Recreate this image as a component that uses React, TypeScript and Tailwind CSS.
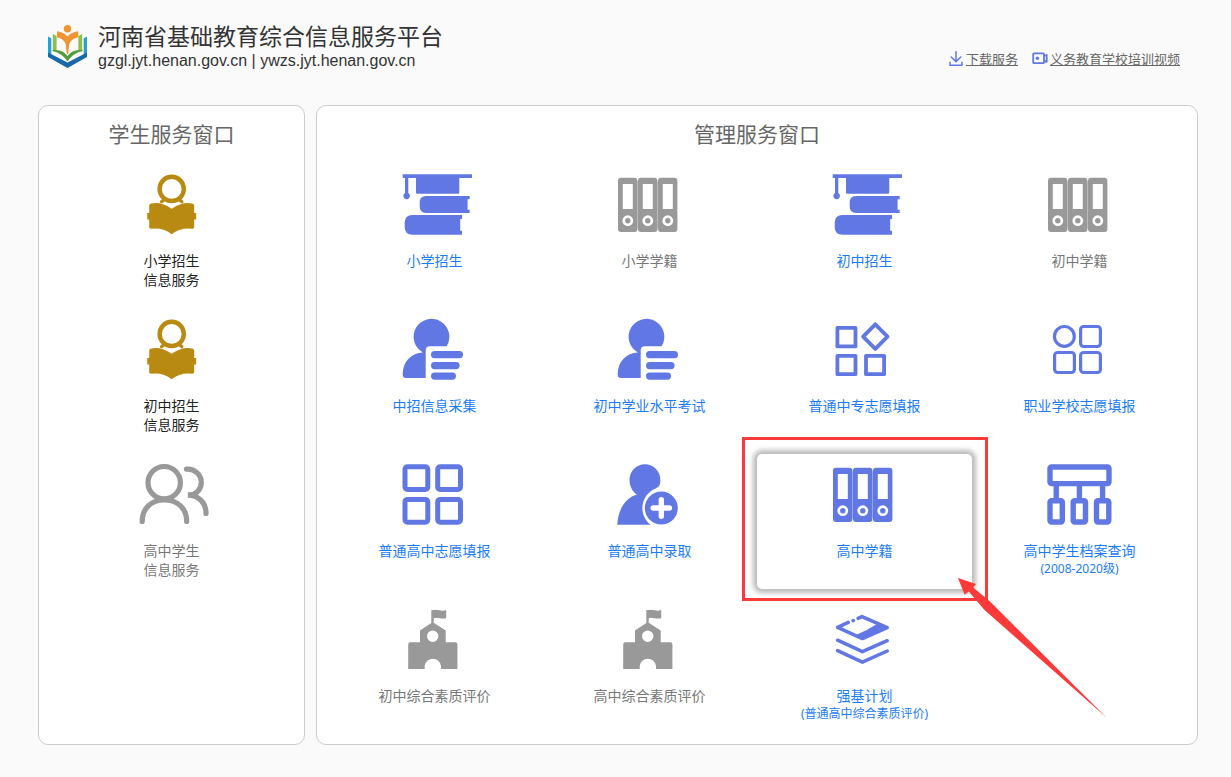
import React from 'react';

type IconName =
  | 'reader'
  | 'people'
  | 'books'
  | 'binders'
  | 'form'
  | 'shapes'
  | 'modules'
  | 'tiles'
  | 'enroll'
  | 'tree'
  | 'school'
  | 'layers';

interface Service {
  label: string;
  note?: string;
  icon: IconName;
  disabled?: boolean;
  active?: boolean;
}

const studentServices: { lines: string[]; icon: IconName; disabled?: boolean }[] = [
  { lines: ['小学招生', '信息服务'], icon: 'reader' },
  { lines: ['初中招生', '信息服务'], icon: 'reader' },
  { lines: ['高中学生', '信息服务'], icon: 'people', disabled: true },
];

const manageServices: Service[] = [
  { label: '小学招生', icon: 'books' },
  { label: '小学学籍', icon: 'binders', disabled: true },
  { label: '初中招生', icon: 'books' },
  { label: '初中学籍', icon: 'binders', disabled: true },
  { label: '中招信息采集', icon: 'form' },
  { label: '初中学业水平考试', icon: 'form' },
  { label: '普通中专志愿填报', icon: 'shapes' },
  { label: '职业学校志愿填报', icon: 'modules' },
  { label: '普通高中志愿填报', icon: 'tiles' },
  { label: '普通高中录取', icon: 'enroll' },
  { label: '高中学籍', icon: 'binders', active: true },
  { label: '高中学生档案查询', note: '(2008-2020级)', icon: 'tree' },
  { label: '初中综合素质评价', icon: 'school', disabled: true },
  { label: '高中综合素质评价', icon: 'school', disabled: true },
  { label: '强基计划', note: '(普通高中综合素质评价)', icon: 'layers' },
];

const glyphs: Record<IconName, React.ReactNode> = {
  reader: (
    <>
      <circle cx="34.7" cy="19.9" r="12.1" fill="none" stroke="currentColor" strokeWidth="4.4" />
      <path d="M24.6 32.6 Q26.4 31.4 28 29.6 M44.8 32.6 Q43 31.4 41.4 29.6" fill="none" stroke="currentColor" strokeWidth="3.4" strokeLinecap="round" />
      <path d="M14.2 34.6 Q24 32.4 34.7 39.8 Q45.4 32.4 55.2 34.6 Q57.2 34.8 57.2 36.8 V44 H59.2 V50.4 H57.2 V58 Q57.2 59.6 55.4 59.8 Q43 58.4 34.7 65.2 Q26.4 58.4 14 59.8 Q12.2 59.6 12.2 58 V50.4 H10.2 V44 H12.2 V36.8 Q12.2 34.8 14.2 34.6Z" />
    </>
  ),
  people: (
    <g fill="none" stroke="currentColor" strokeWidth="5.2" strokeLinecap="round">
      <circle cx="27.2" cy="23.7" r="16.2" />
      <path d="M5.2 62.4 C5.2 49 14.7 41 27.4 41 C40.2 41 49.7 49 49.7 62.4" />
      <path d="M49.4 10.2 C57.7 9.4 64.3 15.8 64.3 23.5 C64.3 30.5 58.7 36.6 50.9 36.2 C61.2 36.2 69 43.5 69 54.4" />
    </g>
  ),
  books: (
    <>
      <path d="M2.7 5.3 H72 V9 H59.3 V23.5 Q59.3 24.7 58 24.7 H17.2 Q16 24.7 16 23.5 V9 H8.3 V24 A3.3 3.3 0 1 1 5 24 V9 H2.7Z" />
      <path d="M26 27 H69.7 V30.3 H67.6 V40.7 H69.7 V44 H26 Q19.7 44 19.7 37.5 V33.5 Q19.7 27 26 27Z" />
      <path d="M12.5 46 H62 V50 H60.2 V61.8 H62 V65.7 H12.5 Q4.7 65.7 4.7 58 V53.7 Q4.7 46 12.5 46Z" />
    </>
  ),
  binders: (
    <>
      {[2.8, 22.8, 42.8].map((x) => (
        <g key={x} transform={`translate(${x} 0)`}>
          <path
            fillRule="evenodd"
            d="M3.2 8.8 H16.6 Q19.6 8.8 19.6 11.8 V60 Q19.6 63 16.6 63 H3.2 Q0.2 63 0.2 60 V11.8 Q0.2 8.8 3.2 8.8Z M5 15 V40 H15 V15Z M10 46.3 A5.4 5.4 0 1 0 10 57.1 A5.4 5.4 0 1 0 10 46.3Z"
          />
          <circle cx="10" cy="51.7" r="2.7" />
        </g>
      ))}
      <path d="M21 12.5 H44 V59.5 H41 V12.6 H24 V59.5 H21Z" opacity="0.45" />
    </>
  ),
  form: (
    <>
      <path d="M22.8 38.4 A17.9 17.9 0 1 1 46.6 32.3 H30 Q25.7 32.3 25.7 36.6 V64 H6 Q2.7 64 2.7 60.5 C2.7 47 11.5 38.9 22.8 38.4Z" />
      <rect x="31" y="37" width="32" height="7.3" rx="3.6" />
      <rect x="31" y="48" width="28.6" height="7.2" rx="3.6" />
      <rect x="31" y="58.4" width="25" height="7.3" rx="3.6" />
    </>
  ),
  shapes: (
    <g fill="none" stroke="currentColor" strokeWidth="3.8" strokeLinejoin="round">
      <rect x="7.4" y="13.8" width="18.1" height="18.6" />
      <rect x="7.4" y="41.8" width="18.1" height="18.4" />
      <rect x="36" y="41.8" width="18.1" height="18.4" />
      <path d="M45.3 10.3 L57.5 22.6 L45.3 34.9 L33.1 22.6Z" />
    </g>
  ),
  modules: (
    <g fill="none" stroke="currentColor" strokeWidth="3.2">
      <circle cx="19.4" cy="22.4" r="9.9" />
      <rect x="35.6" y="12.5" width="19.8" height="20" rx="3" />
      <rect x="9.6" y="38.5" width="19.8" height="20" rx="3" />
      <rect x="35.6" y="38.5" width="19.8" height="20" rx="3" />
    </g>
  ),
  tiles: (
    <g fill="none" stroke="currentColor" strokeWidth="5">
      <rect x="5" y="7.7" width="22.8" height="22.8" rx="2.5" />
      <rect x="37.7" y="7.7" width="22.8" height="22.8" rx="2.5" />
      <rect x="5" y="40.4" width="22.8" height="22.8" rx="2.5" />
      <rect x="37.7" y="40.4" width="22.8" height="22.8" rx="2.5" />
    </g>
  ),
  enroll: (
    <>
      <path d="M22 35.5 C17.5 33 14.5 27 14.5 21 A15.4 15.8 0 0 1 45.3 21 C45.3 26.5 44.5 28 39 30.2 A21.2 21.2 0 0 0 35.4 65.7 H2.3 C3 50 11 38.5 22 35.5Z" />
      <path
        fillRule="evenodd"
        d="M46.3 32.6 A16.5 16.5 0 1 1 46.3 65.6 A16.5 16.5 0 1 1 46.3 32.6Z M43.6 40.8 V46.3 H38.2 A2.7 2.7 0 0 0 38.2 51.7 H43.6 V57.3 A2.7 2.7 0 0 0 49 57.3 V51.7 H54.4 A2.7 2.7 0 0 0 54.4 46.3 H49 V40.8 A2.7 2.7 0 0 0 43.6 40.8Z"
      />
    </>
  ),
  tree: (
    <g fill="none" stroke="currentColor" strokeWidth="5.4">
      <rect x="5" y="8" width="59" height="16.6" rx="1.5" />
      <rect x="5" y="41.7" width="12.3" height="21.3" rx="1.5" />
      <rect x="28.2" y="41.7" width="12.3" height="21.3" rx="1.5" />
      <rect x="51.5" y="41.7" width="12.3" height="21.3" rx="1.5" />
      <path d="M11.2 26 V41 M34.4 26 V41 M57.6 26 V41" />
    </g>
  ),
  school: (
    <path
      fillRule="evenodd"
      d="M31.3 6.2 Q36 5.5 39.5 6.3 T46.2 6 V14.2 Q43 15 39.5 14.2 T33.7 14.3 V18.8 L45.7 26.6 V38.3 H55.3 Q57.4 38.3 57.4 40.4 V65 H41 V62 A8.2 8.2 0 0 0 24.7 62 V65 H8.2 V40.4 Q8.2 38.3 10.3 38.3 H20 V26.6 L31.3 19Z M32.7 26.6 A5.7 5.7 0 1 0 32.7 38 A5.7 5.7 0 1 0 32.7 26.6Z"
    />
  ),
  layers: (
    <>
      <path
        d="M18.3 18.4 L7.6 23.4 L32.4 34.6 L57.2 23.6 L32 12.6 L28 14.4 M7.6 36.2 L32.4 47.7 L57.2 36.7 M7.6 46.6 L32.4 58.2 L57.2 47"
        fill="none"
        stroke="currentColor"
        strokeWidth="3.5"
        strokeLinecap="round"
        strokeLinejoin="round"
      />
      <circle cx="23.2" cy="16.6" r="1.9" />
      <path d="M47 20 L58 23.6 L32.4 36 L25 31.4 Q37 26.5 47 20Z" />
    </>
  ),
};

const ServiceIcon: React.FC<{ name: IconName; color: string }> = ({ name, color }) => (
  <svg viewBox="0 0 70 70" className={`size-[70px] overflow-visible ${color}`} fill="currentColor" aria-hidden="true">
    {glyphs[name]}
  </svg>
);

const Logo: React.FC = () => (
  <svg viewBox="0 0 39 43" className="w-[39px] h-[43px] shrink-0" aria-hidden="true">
    {/* Blue cover */}
    <path d="M0 11.5 L3.3 13.2 V30 L0 28.5Z M39 11.5 L35.7 13.2 V30 L39 28.5Z" fill="#2a9fd6" />
    <path d="M0 27.5 L19.5 37.5 L39 27.5 V32 L19.5 43 L0 32Z" fill="#1769a8" />
    {/* Green pages */}
    <path d="M4.8 9 L8.6 11 V25.5 L4.8 26.5Z M34.2 9 L30.4 11 V25.5 L34.2 26.5Z" fill="#8cc04b" />
    <path d="M4.8 25.5 Q15 24.5 19.5 31.5 Q24 24.5 34.2 25.5 Q24 28.5 19.5 36 Q15 28.5 4.8 25.5Z" fill="#4f9a3a" stroke="#4f9a3a" strokeWidth="0.8" />
    {/* Figure */}
    <circle cx="19.5" cy="3.7" r="3.7" fill="#ef9532" />
    <path d="M9 6.2 Q16.5 7.5 19.5 11.5 Q22.5 7.5 30.2 6.2 V12.2 Q23 14 21.3 19 L20.2 29 H18.8 L17.7 19 Q16 14 9 12.2Z" fill="#ef9532" />
  </svg>
);

const Header: React.FC = () => (
  <header className="flex justify-between pt-[22px] pl-[10px] pr-[18px] h-[105px]">
    <div className="flex items-start gap-[11px]">
      <div className="pt-[3px]">
        <Logo />
      </div>
      <div className="text-[#333]">
        <h1 className="text-[23px] leading-[28px]">河南省基础教育综合信息服务平台</h1>
        <p className="font-['Liberation_Sans',sans-serif] text-base leading-[22px]">gzgl.jyt.henan.gov.cn | ywzs.jyt.henan.gov.cn</p>
      </div>
    </div>
    <nav className="flex items-start gap-[14px] pt-[27px] text-[13px] leading-5 text-[#666]">
      <a href="#download" className="flex items-center gap-[3px]">
        <svg viewBox="0 0 14 16" className="w-[14px] h-4" fill="none" stroke="#6178e4" strokeWidth="1.5" strokeLinecap="round" strokeLinejoin="round" aria-hidden="true">
          <path d="M7 0.8 V10.6 M2.2 6 L7 10.8 L11.8 6 M1 11.2 V14.2 H13 V11.2" />
        </svg>
        <span className="underline">下载服务</span>
      </a>
      <a href="#videos" className="flex items-center gap-[2px]">
        <svg viewBox="0 0 16 16" className="size-4" fill="none" stroke="#6178e4" strokeWidth="1.8" strokeLinejoin="round" aria-hidden="true">
          <rect x="1.2" y="2.4" width="10.8" height="9.8" rx="0.8" />
          <path d="M12.2 4.8 L14.7 4 V10.8 L12.2 9.8" />
          <circle cx="5.4" cy="7.3" r="1.7" fill="#6178e4" stroke="none" />
        </svg>
        <span className="underline">义务教育学校培训视频</span>
      </a>
    </nav>
  </header>
);

const Panel: React.FC<{ title: string; className: string; children: React.ReactNode }> = ({ title, className, children }) => (
  <section className={`bg-white border border-[#ccc] rounded-[10px] px-[10px] pt-3 pb-[10px] ${className}`}>
    <h2 className="text-[21px] leading-8 mb-[14px] text-center text-[#666]">{title}</h2>
    {children}
  </section>
);

// Red frame and arrow pointing at the highlighted entry
const Callout: React.FC = () => (
  <div className="pointer-events-none" aria-hidden="true">
    <div className="absolute -left-[15px] -right-4 -top-[17px] -bottom-3 border-3 border-[#fc3a39]" />
    <svg viewBox="0 0 150 141" className="absolute left-[201px] top-[124px] w-[150px] h-[141px] z-10" fill="#fc3a39">
      <path d="M0 0 L18 6 L15.2 9.6 L32 23.5 L149 140 L26.5 32 L10.8 13.6 L6.6 16.8Z" />
    </svg>
  </div>
);

const ServiceCard: React.FC<{ service: Service }> = ({ service }) => {
  const { label, note, icon, disabled, active } = service;
  const card = active ? 'bg-white shadow-[0_0_5px_4px_rgba(0,0,0,0.27)]' : '';

  return (
    <li className="relative">
      <a
        href={`#${label}`}
        className={`flex flex-col items-center h-[135px] pt-[5px] rounded-[5px] ${card} ${disabled ? 'text-[#777]' : 'text-[#1a7cf9]'}`}
      >
        <ServiceIcon name={icon} color={disabled ? 'text-[#999]' : 'text-[#6178e4]'} />
        <span className="mt-3 text-sm leading-[19px]">{label}</span>
        {note && <span className="text-xs leading-[18px]">{note}</span>}
      </a>
      {active && <Callout />}
    </li>
  );
};

const App: React.FC = () => {
  return (
    <div className="min-h-screen bg-[#fafafa] pl-[38px] pr-[33px] pb-8 font-['Noto_Sans','Noto_Sans_CJK_SC',sans-serif]" lang="zh-CN">
      <Header />
      <main className="flex gap-[11px]">
        <Panel title="学生服务窗口" className="w-[267px] shrink-0">
          <ul className="flex flex-col gap-[10px]">
            {studentServices.map((item, i) => (
              <li key={i}>
                <a
                  href={`#student-${i + 1}`}
                  className={`flex flex-col items-center h-[135px] pt-[5px] ${item.disabled ? 'text-[#777]' : 'text-[#222]'}`}
                >
                  <ServiceIcon name={item.icon} color={item.disabled ? 'text-[#999]' : 'text-[#b88a12]'} />
                  <span className="mt-3 text-sm leading-[19px] text-center">
                    {item.lines[0]}
                    <br />
                    {item.lines[1]}
                  </span>
                </a>
              </li>
            ))}
          </ul>
        </Panel>
        <Panel title="管理服务窗口" className="flex-1">
          <ul className="grid grid-cols-4 gap-y-[10px]">
            {manageServices.map((service) => (
              <ServiceCard key={service.label + service.icon} service={service} />
            ))}
          </ul>
        </Panel>
      </main>
    </div>
  );
};

export default App;
